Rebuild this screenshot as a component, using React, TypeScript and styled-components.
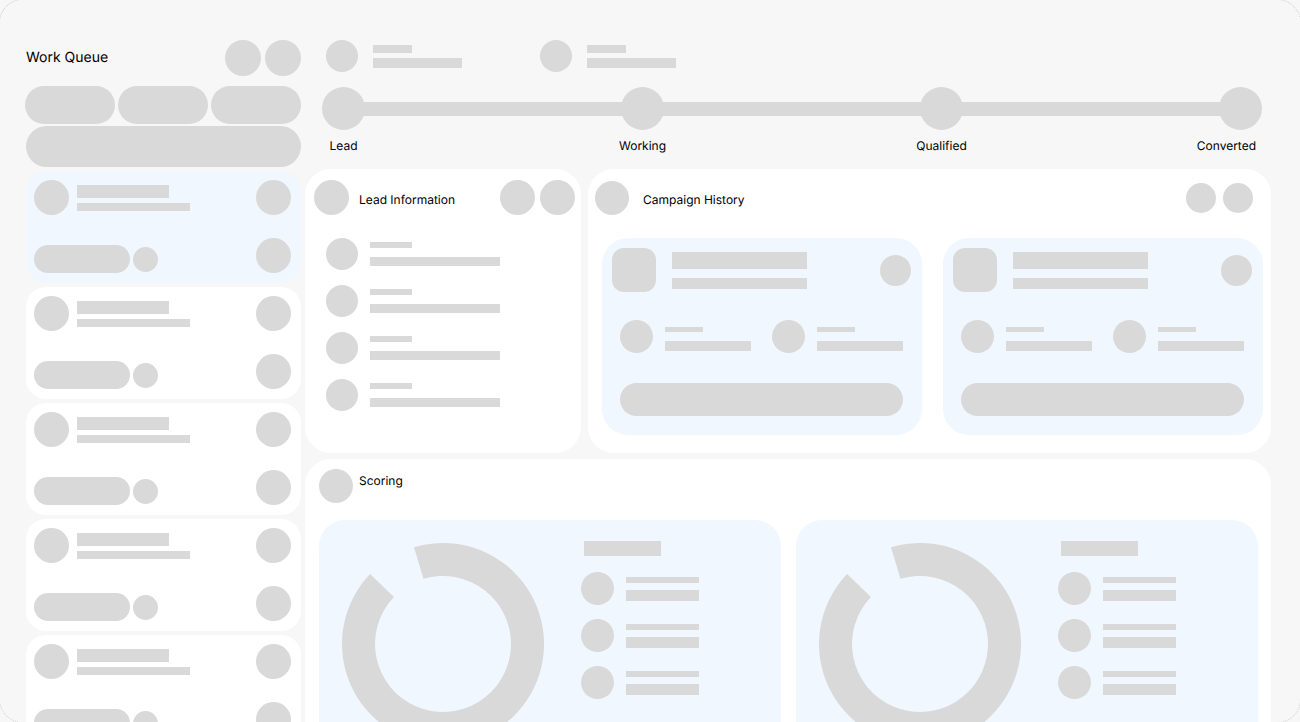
import React from "react";
import styled, { createGlobalStyle } from "styled-components";

const Global = createGlobalStyle`
  html, body { margin: 0; padding: 0; background: #f7f7f7; }
  body {
    font-family: Inter, "Liberation Sans", sans-serif;
    color: #000;
    text-rendering: geometricPrecision;
  }
`;

const GRAY = "#d9d9d9";
const BLUE = "#f0f7ff";

const Page = styled.div`
  position: relative;
  width: 1300px;
  height: 722px;
  overflow: hidden;
  background: #f7f7f7;
  display: flex;
  gap: 4px;
  padding: 40px 0 0 26px;
  box-sizing: border-box;
`;
const FrameEdge = styled.div`
  position: absolute;
  inset: -1px;
  border: 1px dotted #cfcfcf;
  border-radius: 24px;
  pointer-events: none;
`;

const Dot = styled.div<{ $s: number }>`
  width: ${(p) => p.$s}px;
  height: ${(p) => p.$s}px;
  border-radius: 50%;
  background: ${GRAY};
  flex: none;
`;
const Bar = styled.div<{ $w: number; $h: number }>`
  width: ${(p) => p.$w}px;
  height: ${(p) => p.$h}px;
  background: ${GRAY};
  flex: none;
`;

/* Left column */
const Queue = styled.aside`
  width: 275px;
  flex: none;
  display: flex;
  flex-direction: column;
`;
const QueueHead = styled.div`
  display: flex;
  flex: none;
  align-items: center;
  justify-content: space-between;
  height: 36px;
  margin-bottom: 10px;
`;
const QueueTitle = styled.h1`
  margin: 0 0 1px;
  font-size: 14px;
  line-height: 17px;
  font-weight: 400;
`;
const IconPair = styled.div<{ $gap: number }>`
  display: flex;
  gap: ${(p) => p.$gap}px;
`;
const Filters = styled.div`
  display: flex;
  flex: none;
  gap: 3px;
  margin: 0 0 2px -1px;
`;
const FilterPill = styled.div`
  width: 90px;
  height: 38px;
  border-radius: 19px;
  background: ${GRAY};
`;
const SearchPill = styled.div`
  flex: none;
  height: 41px;
  border-radius: 20.5px;
  background: ${GRAY};
  margin-bottom: 4px;
`;
const QueueList = styled.div`
  display: flex;
  flex: none;
  flex-direction: column;
  gap: 4px;
`;
const QueueCard = styled.div<{ $active?: boolean }>`
  height: 112px;
  flex: none;
  box-sizing: border-box;
  padding: 9px 10px 10px 8px;
  border-radius: 20px;
  background: ${(p) => (p.$active ? BLUE : "#fff")};
  display: flex;
  flex-direction: column;
  justify-content: space-between;
`;
const CardRow = styled.div<{ $end?: boolean }>`
  display: flex;
  justify-content: space-between;
  align-items: ${(p) => (p.$end ? "flex-end" : "flex-start")};
`;
const CardLines = styled.div`
  flex: 1;
  margin-left: 8px;
  padding-top: 5px;
  display: flex;
  flex-direction: column;
  gap: 5px;
`;
const TagGroup = styled.div`
  display: flex;
  align-items: flex-end;
  gap: 3px;
`;
const Tag = styled.div`
  width: 96px;
  height: 28px;
  border-radius: 14px;
  background: ${GRAY};
`;
const TagDot = styled(Dot)`
  margin-bottom: 1px;
`;

/* Main column */
const Main = styled.main`
  width: 966px;
  flex: none;
  display: flex;
  flex-direction: column;
`;
const Meta = styled.div`
  display: flex;
  flex: none;
  padding-left: 21px;
  margin-bottom: 15px;
`;
const MetaItem = styled.div`
  width: 214px;
  display: flex;
  gap: 15px;
`;
const MetaLines = styled.div`
  padding-top: 5px;
  display: flex;
  flex-direction: column;
  gap: 5px;
`;
const Track = styled.div`
  display: flex;
  flex: none;
  align-items: center;
  margin: 0 9px 0 17px;
`;
const TrackBar = styled.div`
  flex: 1;
  height: 14px;
  margin: 0 -3px;
  background: ${GRAY};
`;
const StepLabels = styled.div`
  display: grid;
  flex: none;
  grid-template-columns: 43px 256px 43px 256px 43px 256px 43px;
  margin: 8px 9px 16px 17px;
`;
const StepLabel = styled.span<{ $col: number; $last?: boolean }>`
  grid-column: ${(p) => p.$col};
  justify-self: ${(p) => (p.$last ? "end" : "center")};
  margin-right: ${(p) => (p.$last ? 6 : 0)}px;
  font-size: 12px;
  line-height: 15px;
  white-space: nowrap;
`;
const TopPanels = styled.div`
  display: grid;
  flex: none;
  grid-template-columns: 276px 683px;
  gap: 7px;
  margin-bottom: 6px;
`;
const Panel = styled.section`
  height: 284px;
  box-sizing: border-box;
  border-radius: 26px;
  background: #fff;
`;
const LeadPanel = styled(Panel)`
  padding: 11px 6px 0 9px;
`;
const CampaignPanel = styled(Panel)`
  padding: 12px 8px 0 7px;
`;
const PanelHead = styled.div<{ $inset?: number }>`
  display: flex;
  align-items: center;
  padding-right: ${(p) => p.$inset ?? 0}px;
`;
const PanelTitle = styled.h2<{ $gap: number }>`
  margin: 3px auto 0 ${(p) => p.$gap}px;
  font-size: 12px;
  line-height: 15px;
  font-weight: 400;
`;
const LeadRows = styled.div`
  margin: 23px 0 0 12px;
  display: flex;
  flex-direction: column;
  gap: 15px;
`;
const LeadRow = styled.div`
  display: flex;
  gap: 12px;
`;
const LeadLines = styled.div`
  padding-top: 4px;
  display: flex;
  flex-direction: column;
  gap: 9px;
`;
const CampaignGrid = styled.div`
  margin: 23px 0 0 7px;
  display: grid;
  grid-template-columns: 320px 320px;
  gap: 21px;
`;
const CampaignCard = styled.article`
  height: 197px;
  box-sizing: border-box;
  padding: 10px 11px 0 10px;
  border-radius: 26px;
  background: ${BLUE};
`;
const CampaignTop = styled.div`
  display: flex;
  margin-bottom: 28px;
`;
const Thumb = styled.div`
  width: 44px;
  height: 44px;
  border-radius: 12px;
  background: ${GRAY};
  flex: none;
`;
const ThumbLines = styled.div`
  margin-left: 16px;
  padding-top: 4px;
  display: flex;
  flex-direction: column;
  gap: 9px;
`;
const ThumbAction = styled.div`
  margin: 7px 0 0 auto;
`;
const Stats = styled.div`
  display: flex;
  margin: 0 0 30px 8px;
`;
const Stat = styled.div`
  width: 152px;
  flex: none;
  display: flex;
  gap: 12px;
`;
const StatLines = styled.div`
  padding-top: 7px;
  display: flex;
  flex-direction: column;
  gap: 9px;
`;
const WideButton = styled.div`
  width: 283px;
  height: 33px;
  margin-left: 8px;
  border-radius: 16.5px;
  background: ${GRAY};
`;
const ScoringPanel = styled.section`
  flex: none;
  border-radius: 26px 26px 0 0;
  background: #fff;
  padding: 10px 13px 0 14px;
  height: 300px;
  box-sizing: border-box;
`;
const ScoringHead = styled.div`
  display: flex;
  margin-bottom: 17px;
`;
const ScoringTitle = styled.h2`
  margin: 4px 0 0 6px;
  font-size: 12px;
  line-height: 15px;
  font-weight: 400;
`;
const ScoreGrid = styled.div`
  display: grid;
  grid-template-columns: 462px 462px;
  gap: 15px;
`;
const ScoreCard = styled.article`
  height: 260px;
  box-sizing: border-box;
  padding: 21px 0 0 23px;
  border-radius: 26px;
  background: ${BLUE};
  display: flex;
  gap: 37px;
`;
const Donut = styled.svg`
  width: 202px;
  height: 202px;
  margin-top: 2px;
  flex: none;
`;
const Legend = styled.div`
  display: flex;
  flex-direction: column;
  gap: 14px;
`;
const LegendTitle = styled(Bar)`
  margin: 0 0 2px 3px;
`;
const LegendRow = styled.div`
  display: flex;
  gap: 12px;
`;
const LegendLines = styled.div`
  padding-top: 5px;
  display: flex;
  flex-direction: column;
  gap: 7px;
`;

const STEPS = ["Lead", "Working", "Qualified", "Converted"];

function ScoreBlock() {
  return (
    <ScoreCard>
      <Donut viewBox="0 0 202 202">
        <path
          fill={GRAY}
          d="M72 4.25A101 101 0 1 1 28.1 31.1L51.92 53.94A68 68 0 1 0 81.46 35.86Z"
        />
      </Donut>
      <Legend>
        <LegendTitle $w={77} $h={15} />
        {[0, 1, 2].map((i) => (
          <LegendRow key={i}>
            <Dot $s={33} />
            <LegendLines>
              <Bar $w={73} $h={6} />
              <Bar $w={73} $h={11} />
            </LegendLines>
          </LegendRow>
        ))}
      </Legend>
    </ScoreCard>
  );
}

function CampaignBlock() {
  return (
    <CampaignCard>
      <CampaignTop>
        <Thumb />
        <ThumbLines>
          <Bar $w={135} $h={17} />
          <Bar $w={135} $h={11} />
        </ThumbLines>
        <ThumbAction>
          <Dot $s={31} />
        </ThumbAction>
      </CampaignTop>
      <Stats>
        {[0, 1].map((i) => (
          <Stat key={i}>
            <Dot $s={33} />
            <StatLines>
              <Bar $w={38} $h={5} />
              <Bar $w={86} $h={10} />
            </StatLines>
          </Stat>
        ))}
      </Stats>
      <WideButton />
    </CampaignCard>
  );
}

export default function App() {
  return (
    <Page>
      <Global />
      <Queue>
        <QueueHead>
          <QueueTitle>Work Queue</QueueTitle>
          <IconPair $gap={4}>
            <Dot $s={36} />
            <Dot $s={36} />
          </IconPair>
        </QueueHead>
        <Filters>
          <FilterPill />
          <FilterPill />
          <FilterPill />
        </Filters>
        <SearchPill />
        <QueueList>
          {[0, 1, 2, 3, 4].map((i) => (
            <QueueCard key={i} $active={i === 0}>
              <CardRow>
                <Dot $s={35} />
                <CardLines>
                  <Bar $w={92} $h={13} />
                  <Bar $w={113} $h={8} />
                </CardLines>
                <Dot $s={35} />
              </CardRow>
              <CardRow $end>
                <TagGroup>
                  <Tag />
                  <TagDot $s={25} />
                </TagGroup>
                <Dot $s={35} />
              </CardRow>
            </QueueCard>
          ))}
        </QueueList>
      </Queue>
      <Main>
        <Meta>
          {[0, 1].map((i) => (
            <MetaItem key={i}>
              <Dot $s={32} />
              <MetaLines>
                <Bar $w={39} $h={8} />
                <Bar $w={89} $h={10} />
              </MetaLines>
            </MetaItem>
          ))}
        </Meta>
        <Track>
          <Dot $s={43} />
          <TrackBar />
          <Dot $s={43} />
          <TrackBar />
          <Dot $s={43} />
          <TrackBar />
          <Dot $s={43} />
        </Track>
        <StepLabels>
          {STEPS.map((s, i) => (
            <StepLabel key={s} $col={i * 2 + 1} $last={i === 3}>
              {s}
            </StepLabel>
          ))}
        </StepLabels>
        <TopPanels>
          <LeadPanel>
            <PanelHead>
              <Dot $s={35} />
              <PanelTitle $gap={10}>Lead Information</PanelTitle>
              <IconPair $gap={5}>
                <Dot $s={35} />
                <Dot $s={35} />
              </IconPair>
            </PanelHead>
            <LeadRows>
              {[0, 1, 2, 3].map((i) => (
                <LeadRow key={i}>
                  <Dot $s={32} />
                  <LeadLines>
                    <Bar $w={42} $h={6} />
                    <Bar $w={130} $h={9} />
                  </LeadLines>
                </LeadRow>
              ))}
            </LeadRows>
          </LeadPanel>
          <CampaignPanel>
            <PanelHead $inset={10}>
              <Dot $s={34} />
              <PanelTitle $gap={14}>Campaign History</PanelTitle>
              <IconPair $gap={7}>
                <Dot $s={30} />
                <Dot $s={30} />
              </IconPair>
            </PanelHead>
            <CampaignGrid>
              <CampaignBlock />
              <CampaignBlock />
            </CampaignGrid>
          </CampaignPanel>
        </TopPanels>
        <ScoringPanel>
          <ScoringHead>
            <Dot $s={34} />
            <ScoringTitle>Scoring</ScoringTitle>
          </ScoringHead>
          <ScoreGrid>
            <ScoreBlock />
            <ScoreBlock />
          </ScoreGrid>
        </ScoringPanel>
      </Main>
      <FrameEdge />
    </Page>
  );
}
